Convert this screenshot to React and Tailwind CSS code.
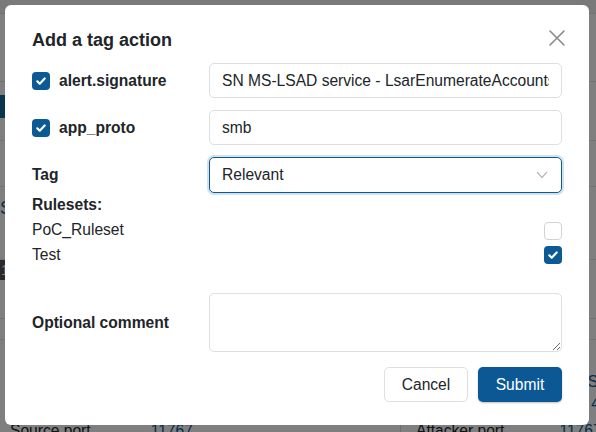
import React from "react";

function Check({ checked }) {
  if (!checked) {
    return <span className="block h-[18px] w-[18px] rounded-[4px] border border-[#cfd3d7] bg-white" />;
  }
  return (
    <span className="flex h-[18px] w-[18px] items-center justify-center rounded-[4px] bg-[#0b5a93]">
      <svg width="12" height="12" viewBox="0 0 12 12" fill="none">
        <path d="M2.3 6.3l2.4 2.4 5-5.2" stroke="#fff" strokeWidth="2.2" strokeLinecap="round" strokeLinejoin="round" />
      </svg>
    </span>
  );
}

function Background() {
  // page behind the modal, only the edges are visible
  return (
    <div className="h-full text-[15.6px] text-[#212529]">
      <div className="h-[14px] border-b border-[#e5e5e5] bg-[#f4f4f4]" />
      <div className="h-[68px] border-b border-[#e5e5e5]" />
      <div className="h-[13px]" />
      <div className="h-[23px] w-[60px] bg-[#17699f]" />
      <div className="h-[23px] border-b border-[#e5e5e5]" />
      <div className="h-[46px] border-b border-[#e5e5e5]" />
      <div className="h-[45px] pt-[9px] text-[18px] leading-[24px] text-[#0b5a93]">Stats</div>
      <div className="h-[28px] border-b border-[#e5e5e5]" />
      <div className="h-[20px] w-[30px] bg-[#555] pl-[1px] text-[14px] leading-[20px] text-white">1</div>
      <div className="h-[39px] border-b border-[#e5e5e5]" />
      <div className="h-[21px] border-b border-[#e5e5e5]" />
      <div className="h-[30px]" />
      <div className="flex h-[22px] justify-end whitespace-nowrap text-[#0b5a93]">
        <span className="-mr-[36px]">Sigma</span>
      </div>
      <div className="flex h-[27px] justify-end whitespace-nowrap text-[#0b5a93]">
        <span className="-mr-[30px]">4624</span>
      </div>
      <div className="grid grid-cols-[400px_196px] whitespace-nowrap">
        <div className="flex gap-[60px] pl-[10px]">
          <span>Source port</span>
          <span className="text-[#0b5a93]">11767</span>
        </div>
        <div className="flex gap-[55px] overflow-hidden border-l border-[#ddd] pl-[15px]">
          <span>Attacker port</span>
          <span className="text-[#0b5a93]">11767</span>
        </div>
      </div>
    </div>
  );
}

export default function App() {
  return (
    <div className="relative h-[432px] w-[596px] overflow-hidden bg-white font-['Liberation_Sans',Arial,sans-serif]">
      <Background />
      <div className="absolute inset-0 bg-black/50" />

      <div className="absolute left-[5px] top-[5px] w-[584px] rounded-[6px] bg-white px-[27px] pb-[23px] pt-[24px] text-[15.6px] text-[#212529]">
        <button className="absolute right-[22px] top-[23px] flex h-[20px] w-[20px] items-center justify-center">
          <svg width="18" height="18" viewBox="0 0 18 18" fill="none">
            <path d="M2 2l14 14M16 2L2 16" stroke="#8a8a8a" strokeWidth="1.6" strokeLinecap="round" />
          </svg>
        </button>

        <h2 className="h-[22px] text-[18px] font-bold leading-[22px]">Add a tag action</h2>

        <div className="mt-[12px] grid grid-cols-[177px_1fr] gap-y-[12px]">
          <div className="flex h-[35px] items-center gap-[9px]">
            <Check checked />
            <span className="font-bold">alert.signature</span>
          </div>
          <input
            readOnly
            value="SN MS-LSAD service - LsarEnumerateAccounts"
            className="h-[35px] w-full rounded-[5px] border border-[#dcdfe3] px-3 text-[15.6px] outline-none"
          />

          <div className="flex h-[35px] items-center gap-[9px]">
            <Check checked />
            <span className="font-bold">app_proto</span>
          </div>
          <input
            readOnly
            value="smb"
            className="h-[35px] w-full rounded-[5px] border border-[#dcdfe3] px-3 text-[15.6px] outline-none"
          />

          <div className="flex h-[36px] items-center font-bold">Tag</div>
          <div className="flex h-[36px] items-center justify-between rounded-[5px] border border-[#0b5a93] pl-3 pr-[13px] shadow-[0_0_0_2px_rgba(11,90,147,0.18)]">
            <span>Relevant</span>
            <svg width="12" height="8" viewBox="0 0 12 8" fill="none">
              <path d="M1 1l5 5.5L11 1" stroke="#b5b9bd" strokeWidth="1.2" />
            </svg>
          </div>
        </div>

        <div className="flex h-[24px] items-center font-bold">Rulesets:</div>
        <div className="flex h-[25px] items-center justify-between">
          <span>PoC_Ruleset</span>
          <span className="pt-[3px]">
            <Check />
          </span>
        </div>
        <div className="flex h-[25px] items-center justify-between">
          <span>Test</span>
          <span className="pt-[1px]">
            <Check checked />
          </span>
        </div>

        <div className="mt-[26px] grid grid-cols-[177px_1fr]">
          <div className="flex items-center font-bold">Optional comment</div>
          <textarea className="block h-[59px] w-full resize-y rounded-[5px] border border-[#dcdfe3] px-3 py-2 outline-none" />
        </div>

        <div className="mt-[15px] flex justify-end gap-[10px]">
          <button className="h-[35px] w-[84px] rounded-[5px] border border-[#dcdfe3] bg-white text-[15.6px] text-[#212529]">
            Cancel
          </button>
          <button className="h-[35px] w-[84px] rounded-[5px] bg-[#0b5895] text-[15.6px] text-white shadow-[0_1px_2px_rgba(0,0,0,0.25)]">
            Submit
          </button>
        </div>
      </div>
    </div>
  );
}
